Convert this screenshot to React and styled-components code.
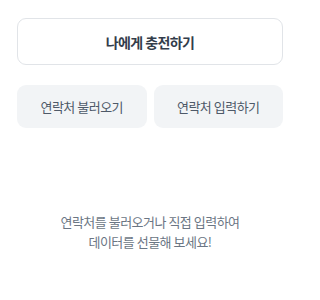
import styled, { createGlobalStyle } from "styled-components";

const GlobalStyle = createGlobalStyle`
  html, body {
    margin: 0;
    padding: 0;
    background: #ffffff;
  }
  body {
    font-family: "Noto Sans CJK KR", "Noto Sans", sans-serif;
    -webkit-font-smoothing: antialiased;
  }
`;

const Page = styled.div`
  width: 300px;
  height: 300px;
  box-sizing: border-box;
  padding: 18px 17px 0;
  display: flex;
  flex-direction: column;
`;

const MainButton = styled.button`
  height: 47px;
  width: 100%;
  border: 1px solid #e1e4e8;
  border-radius: 9px;
  background: #ffffff;
  color: #333d4b;
  font-family: inherit;
  font-size: 14px;
  font-weight: 700;
  letter-spacing: -0.6px;
  cursor: pointer;
`;

const ButtonRow = styled.div`
  display: grid;
  grid-template-columns: 1fr 1fr;
  gap: 7px;
  margin-top: 20px;
`;

const SubButton = styled.button`
  height: 43px;
  border: none;
  border-radius: 9px;
  background: #f2f4f6;
  color: #4e5968;
  font-family: inherit;
  font-size: 13px;
  font-weight: 400;
  letter-spacing: -0.5px;
  cursor: pointer;
`;

const Notice = styled.p`
  margin: 84px 0 0;
  text-align: center;
  color: #6b7684;
  font-size: 13px;
  line-height: 20px;
  letter-spacing: -0.5px;
`;

const App = () => {
  return (
    <Page>
      <GlobalStyle />
      <MainButton>나에게 충전하기</MainButton>
      <ButtonRow>
        <SubButton>연락처 불러오기</SubButton>
        <SubButton>연락처 입력하기</SubButton>
      </ButtonRow>
      <Notice>
        연락처를 불러오거나 직접 입력하여
        <br />
        데이터를 선물해 보세요!
      </Notice>
    </Page>
  );
};

export default App;
